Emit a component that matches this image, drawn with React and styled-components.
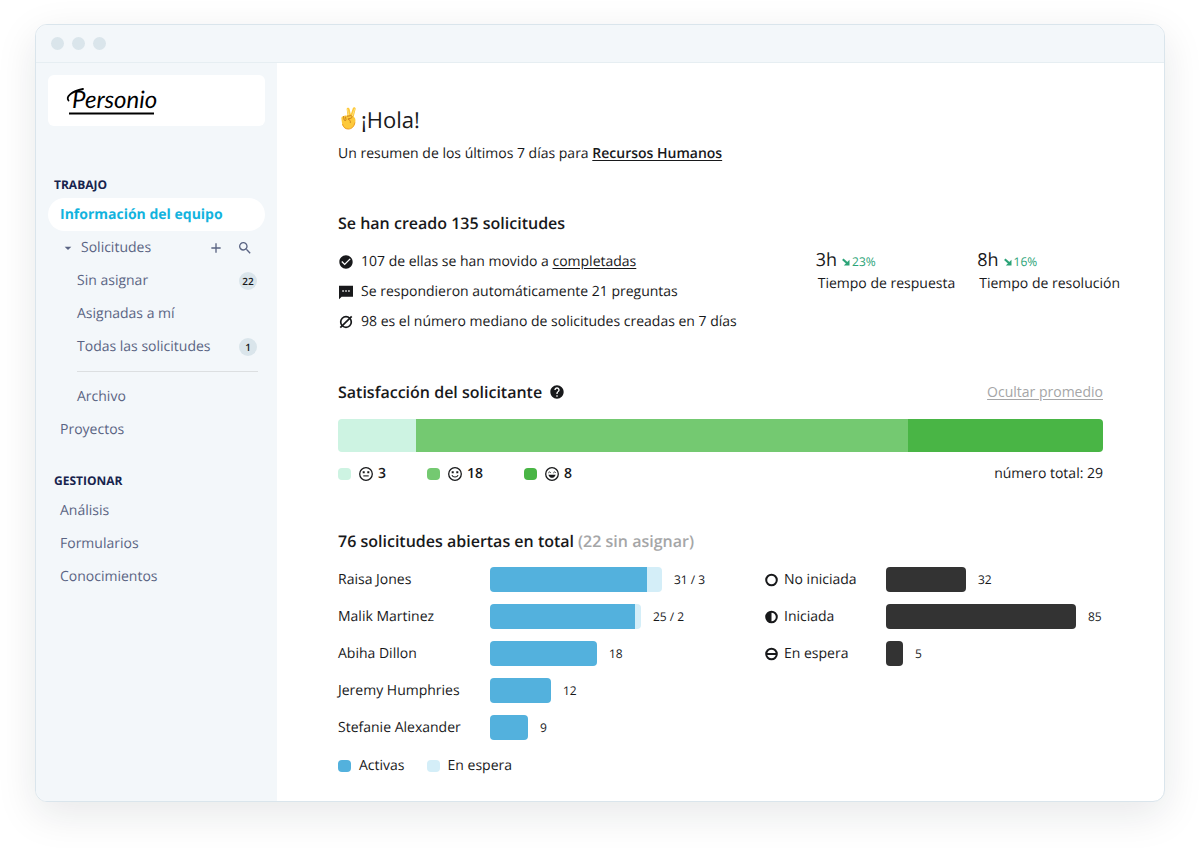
import React from 'react';
import styled, { createGlobalStyle } from 'styled-components';
import { MdAdd, MdArrowDropDown, MdCheckCircle, MdHelp, MdSearch } from 'react-icons/md';

const GlobalStyle = createGlobalStyle`
*, *::before, *::after {
  box-sizing: border-box;
}
body {
  margin: 0;
  background: #fff;
  color: #18191b;
  font-family: "Open Sans", "Noto Sans", sans-serif;
  font-size: 14px;
  line-height: 22px;
  text-rendering: geometricPrecision;
}
h1, h2, h3, p, ul {
  margin: 0;
  padding: 0;
}
ul {
  list-style: none;
}
button {
  padding: 0;
  border: 0;
  background: none;
  color: inherit;
  font: inherit;
  cursor: pointer;
}
svg {
  display: block;
  flex: none;
}
`

const Window = styled.div`
margin: 24px 35px 46px;
border: 1px solid #dae5ec;
border-radius: 12px;
background: #fff;
box-shadow: 0 12px 40px rgba(20, 30, 40, .1);
overflow: hidden;
`

const TitleBar = styled.header`
display: flex;
align-items: center;
gap: 8px;
height: 38px;
padding: 0 15px;
border-bottom: 1px solid #e6eef2;
background: #f3f7fa;
`

const Dot = styled.span`
width: 13px;
height: 13px;
border-radius: 50%;
background: #dae5eb;
`

const Columns = styled.div`
display: flex;
`

const Sidebar = styled.nav`
flex: none;
width: 241px;
padding: 12px;
background: #f3f7fa;
color: #5a6483;
`

const LogoCard = styled.a`
display: block;
height: 51px;
margin-bottom: 44px;
padding: 8px 16px;
border-radius: 6px;
background: #fff;
`

const NavTitle = styled.h3`
padding: 2px 0 0 6px;
color: #17234d;
font-size: 12px;
font-weight: 700;
line-height: 26px;

ul + & {
  margin-top: 20px;
}
`

const NavItem = styled.li`
display: flex;
align-items: center;
height: 33px;
padding: 0 8px 0 ${({$level}) => ($level === 2 ? 29 : 12)}px;
border-radius: 17px;
background: ${({$active}) => ($active ? '#fff' : 'transparent')};
`

const NavLink = styled.a`
flex: 1;
color: ${({$active}) => ($active ? '#12b3de' : 'inherit')};
font-weight: ${({$active}) => ($active ? 700 : 400)};
text-decoration: none;
`

const IconButton = styled.button`
display: flex;
align-items: center;
justify-content: center;
width: 16px;
`

const Toggle = styled(IconButton)`
margin-right: 5px;
`

const Tools = styled.div`
display: flex;
gap: 13px;
margin-right: 4px;
`

const Badge = styled.span`
width: 18px;
height: 18px;
border-radius: 50%;
background: #dae5eb;
color: #18191b;
font-size: 10px;
font-weight: 600;
line-height: 18px;
text-align: center;
`

const Divider = styled.li`
height: 1px;
margin: 8px 7px 8px 29px;
background: #dcdfe1;
`

const Main = styled.main`
flex: 1;
min-width: 0;
padding: 41px 44px 24px 61px;
`

const Greeting = styled.h1`
display: flex;
align-items: center;
gap: 3px;
font-size: 22px;
font-weight: 400;
line-height: 32px;
`

const Intro = styled.p`
margin-top: 7px;
`

const TextLink = styled.a`
color: inherit;
font-weight: ${({$strong}) => ($strong ? 600 : 400)};
text-underline-offset: 2px;
`

const Section = styled.section`
margin: 44px 17px 0 0;
`

const Summary = styled.section`
margin-top: 46px;
`

const Heading = styled.h2`
display: flex;
align-items: center;
gap: 7px;
font-size: 16px;
font-weight: 600;
line-height: 24px;
`

const Muted = styled.span`
margin-left: -3px;
color: #a5a6a7;
`

const Split = styled.div`
display: flex;
justify-content: space-between;
align-items: ${({$center}) => ($center ? 'center' : 'flex-start')};
`

const FactList = styled.ul`
margin-top: 11px;
`

const Fact = styled.li`
display: flex;
align-items: center;
gap: 7px;
height: 30px;
padding-top: 1px;
`

const Stats = styled.div`
display: flex;
gap: 22px;
margin-top: 13px;
`

const StatValue = styled.p`
display: flex;
align-items: baseline;
gap: 5px;
height: 24px;
font-size: 18px;
line-height: 24px;
`

const Trend = styled.span`
display: flex;
align-items: center;
gap: 2px;
color: #2ba377;
font-size: 12px;
`

const StatLabel = styled.p`
padding-left: 2px;
line-height: 24px;
`

const HideButton = styled.button`
color: #a5a6a7;
text-decoration: underline;
text-underline-offset: 2px;
`

const Bar = styled.div`
display: flex;
height: ${({$tall}) => ($tall ? 33 : 25)}px;
margin-top: ${({$tall}) => ($tall ? 15 : 0)}px;
border-radius: 4px;
overflow: hidden;
`

const Segment = styled.span`
background: ${({$color}) => $color};
`

const ScoreLine = styled(Split)`
margin-top: 11px;
`

const Scores = styled.ul`
display: flex;
gap: 41px;
`

const Score = styled.li`
display: flex;
align-items: center;
gap: 4px;
font-weight: 600;
`

const Swatch = styled.span`
width: 13px;
height: 12px;
margin-right: ${({$gap}) => $gap}px;
border-radius: 4px;
background: ${({$color}) => $color};
`

const BarColumns = styled.div`
display: grid;
grid-template-columns: 427fr 338fr;
margin-top: 14px;
`

const BarRows = styled.ul`
display: flex;
flex-direction: column;
gap: 12px;
`

const BarRow = styled.li`
display: flex;
align-items: center;
`

const BarLabel = styled.span`
display: flex;
align-items: center;
gap: 5px;
flex: none;
width: ${({$width}) => $width}px;
`

const BarValue = styled.span`
margin-left: 12px;
font-size: 12px;
`

const Legend = styled.div`
display: flex;
gap: 22px;
margin-top: 15px;
`

const LegendItem = styled.span`
display: flex;
align-items: center;
`

const Logo = () => (
  <svg width="100" height="36" viewBox="0 0 100 36" role="img" aria-label="Personio">
    <path d="M4.500 17.500C1.500 14 7 8.500 19 6" fill="none" stroke="#000" strokeWidth="1.800" strokeLinecap="round" />
    <text x="8" y="25" fill="#000" fontFamily="Lato, sans-serif" fontStyle="italic" fontSize="24">Personio</text>
    <path d="M5 30.500h85" stroke="#000" strokeWidth="2" />
  </svg>
)

const VictoryHand = () => (
  <svg width="20" height="26" viewBox="0 0 20 26" aria-hidden="true">
    <path d="M8.700 2.400c-.4-1.900 2.400-2.400 2.900-.5l1.200 5.400 2-6c.7-1.800 3.300-.9 2.800.9l-1.900 7.500c1.600 1 2 2.800 1.600 5.400-.6 4.200-3 6.900-7 6.900-3.800 0-5.700-2.300-6.300-5.800l-.6-4.400c-.2-1.800.8-2.700 2.200-2.500.5-.8 1.700-1.200 2.800-.6l1-.4z" fill="#fdc93b" />
    <path d="M9.500 2.600l1.400 6.100M16.600 2l-2.300 7" fill="none" stroke="#ffe17c" strokeWidth="1" strokeLinecap="round" />
    <path d="M5.500 9.500l.7 3.500c.4 1 1.900.8 1.800-.3l-.4-2.600M9.300 9.200l3.400-.6c1.700 0 2 2 .4 2.500l-3.200.9c1.800.6 2.700 1.800 2.500 3.500" fill="none" stroke="#c47b18" strokeWidth=".9" strokeLinecap="round" />
    <path d="M4.500 17c1 3.600 3.200 5 5.700 5 3.400 0 5.800-2.100 6.700-6.500" fill="none" stroke="#ef9d26" strokeWidth="1" />
  </svg>
)

const ChatIcon = () => (
  <svg width="16" height="16" viewBox="0 0 24 24" fill="currentColor" aria-hidden="true">
    <path fillRule="evenodd" d="M1.500 2.500h21v16.500H5.500L1.500 23zM6.500 9.500v2.200h2.200V9.500zm4.400 0v2.200h2.200V9.500zm4.400 0v2.200h2.200V9.500z" />
  </svg>
)

const MedianIcon = () => (
  <svg width="16" height="16" viewBox="0 0 16 16" fill="none" stroke="currentColor" strokeWidth="1.700" aria-hidden="true">
    <circle cx="8" cy="8" r="5.300" />
    <path d="M2.300 13.700L13.700 2.300" />
  </svg>
)

const TrendArrow = () => (
  <svg width="8" height="8" viewBox="0 0 8 8" aria-hidden="true">
    <path d="M.8 1.300l4.700 4.200" stroke="currentColor" strokeWidth="2.200" />
    <path d="M7.500 1.800v5.700H1.800z" fill="currentColor" />
  </svg>
)

const FaceIcon = ({mood}) => (
  <svg width="16" height="16" viewBox="0 0 16 16" fill="none" stroke="currentColor" strokeWidth="1.300" aria-hidden="true">
    <circle cx="8" cy="8" r="6.300" />
    {mood === 'great' ? (
      <path d="M4.400 6.900l1.100-1.100 1.100 1.100M9.400 6.900l1.100-1.100 1.100 1.100" strokeWidth="1" />
    ) : (
      <path d="M4.700 6.300h2M9.300 6.300h2" strokeWidth="1.900" />
    )}
    {mood === 'neutral' && <path d="M5.300 9.900h5.400" strokeWidth="1.100" />}
    {mood === 'good' && <path d="M4.900 9.200c1.300 2.400 4.900 2.400 6.200 0" strokeWidth="1.100" />}
    {mood === 'great' && <path d="M4.400 8.700h7.200c-1 4.100-6.200 4.100-7.200 0z" fill="currentColor" stroke="none" />}
  </svg>
)

const StatusIcon = ({status}) => (
  <svg width="14" height="14" viewBox="0 0 14 14" fill="none" stroke="currentColor" strokeWidth="2" aria-hidden="true">
    <circle cx="6.500" cy="7" r="5.300" />
    {status === 'started' && <path d="M6.500 1.700a5.300 5.300 0 0 0 0 10.600z" fill="currentColor" stroke="none" />}
    {status === 'waiting' && <path d="M1.500 7h10" />}
  </svg>
)

const scores = [
  { mood: 'neutral', count: 3, share: 78, color: '#cdf3e2' },
  { mood: 'good', count: 18, share: 492, color: '#74c971' },
  { mood: 'great', count: 8, share: 195, color: '#49b545' },
]

const people = [
  { name: 'Raisa Jones', active: 157, waiting: 15, value: '31 / 3' },
  { name: 'Malik Martinez', active: 145, waiting: 6, value: '25 / 2' },
  { name: 'Abiha Dillon', active: 107, waiting: 0, value: '18' },
  { name: 'Jeremy Humphries', active: 61, waiting: 0, value: '12' },
  { name: 'Stefanie Alexander', active: 38, waiting: 0, value: '9' },
]

const statuses = [
  { name: 'No iniciada', status: 'open', width: 80, value: 32 },
  { name: 'Iniciada', status: 'started', width: 190, value: 85 },
  { name: 'En espera', status: 'waiting', width: 17, value: 5 },
]

const stats = [
  { value: '3h', trend: '23%', label: 'Tiempo de respuesta' },
  { value: '8h', trend: '16%', label: 'Tiempo de resolución' },
]

function Item({children, level, active, badge}) {
  return (
    <NavItem $level={level} $active={active}>
      <NavLink href="#" $active={active}>{children}</NavLink>
      {badge && <Badge>{badge}</Badge>}
    </NavItem>
  );
}

function App() {
  return (
    <>
      <GlobalStyle />
      <Window>
        <TitleBar>
          <Dot /><Dot /><Dot />
        </TitleBar>
        <Columns>
          <Sidebar>
            <LogoCard href="#"><Logo /></LogoCard>
            <NavTitle>TRABAJO</NavTitle>
            <ul>
              <Item active>Información del equipo</Item>
              <NavItem>
                <Toggle aria-label="Contraer solicitudes"><MdArrowDropDown size={16} /></Toggle>
                <NavLink href="#">Solicitudes</NavLink>
                <Tools>
                  <IconButton aria-label="Añadir"><MdAdd size={16} /></IconButton>
                  <IconButton aria-label="Buscar"><MdSearch size={16} /></IconButton>
                </Tools>
              </NavItem>
              <Item level={2} badge="22">Sin asignar</Item>
              <Item level={2}>Asignadas a mí</Item>
              <Item level={2} badge="1">Todas las solicitudes</Item>
              <Divider />
              <Item level={2}>Archivo</Item>
              <Item>Proyectos</Item>
            </ul>
            <NavTitle>GESTIONAR</NavTitle>
            <ul>
              <Item>Análisis</Item>
              <Item>Formularios</Item>
              <Item>Conocimientos</Item>
            </ul>
          </Sidebar>

          <Main>
            <Greeting><VictoryHand />¡Hola!</Greeting>
            <Intro>
              Un resumen de los últimos 7 días para <TextLink href="#" $strong>Recursos Humanos</TextLink>
            </Intro>

            <Summary>
              <Heading>Se han creado 135 solicitudes</Heading>
              <Split>
                <FactList>
                  <Fact><MdCheckCircle size={16} /><span>107 de ellas se han movido a <TextLink href="#">completadas</TextLink></span></Fact>
                  <Fact><ChatIcon />Se respondieron automáticamente 21 preguntas</Fact>
                  <Fact><MedianIcon />98 es el número mediano de solicitudes creadas en 7 días</Fact>
                </FactList>
                <Stats>
                  {stats.map(({value, trend, label}) => (
                    <div key={label}>
                      <StatValue>{value}<Trend><TrendArrow />{trend}</Trend></StatValue>
                      <StatLabel>{label}</StatLabel>
                    </div>
                  ))}
                </Stats>
              </Split>
            </Summary>

            <Section>
              <Split $center>
                <Heading>Satisfacción del solicitante <MdHelp size={16} /></Heading>
                <HideButton>Ocultar promedio</HideButton>
              </Split>
              <Bar $tall>
                {scores.map(({mood, share, color}) => (
                  <Segment key={mood} $color={color} style={{ flexGrow: share }} />
                ))}
              </Bar>
              <ScoreLine>
                <Scores>
                  {scores.map(({mood, count, color}) => (
                    <Score key={mood}>
                      <Swatch $color={color} $gap={3} />
                      <FaceIcon mood={mood} />
                      {count}
                    </Score>
                  ))}
                </Scores>
                <p>número total: 29</p>
              </ScoreLine>
            </Section>

            <Section>
              <Heading>76 solicitudes abiertas en total <Muted>(22 sin asignar)</Muted></Heading>
              <BarColumns>
                <BarRows>
                  {people.map(({name, active, waiting, value}) => (
                    <BarRow key={name}>
                      <BarLabel $width={152}>{name}</BarLabel>
                      <Bar>
                        <Segment $color="#53b1dd" style={{ width: active }} />
                        <Segment $color="#d4eef8" style={{ width: waiting }} />
                      </Bar>
                      <BarValue>{value}</BarValue>
                    </BarRow>
                  ))}
                </BarRows>
                <BarRows>
                  {statuses.map(({name, status, width, value}) => (
                    <BarRow key={name}>
                      <BarLabel $width={121}><StatusIcon status={status} />{name}</BarLabel>
                      <Bar>
                        <Segment $color="#333" style={{ width }} />
                      </Bar>
                      <BarValue>{value}</BarValue>
                    </BarRow>
                  ))}
                </BarRows>
              </BarColumns>
              <Legend>
                <LegendItem><Swatch $color="#53b1dd" $gap={8} />Activas</LegendItem>
                <LegendItem><Swatch $color="#d4eef8" $gap={8} />En espera</LegendItem>
              </Legend>
            </Section>
          </Main>
        </Columns>
      </Window>
    </>
  );
}

export default App;
